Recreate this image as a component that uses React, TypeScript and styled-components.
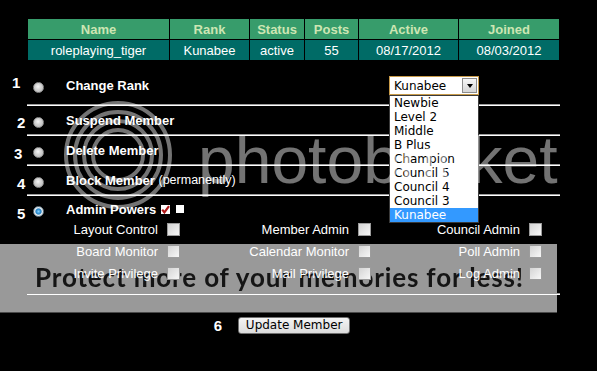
import React from "react";
import styled, { createGlobalStyle } from "styled-components";

const GlobalStyle = createGlobalStyle`
  html, body {
    margin: 0;
    padding: 0;
    background: #000;
  }
  body {
    font-family: "Liberation Sans", Arial, sans-serif;
  }
`;

const Page = styled.div`
  position: relative;
  width: 597px;
  height: 371px;
  overflow: hidden;
  background: #000;
  color: #fff;
  font-family: "Liberation Sans", Arial, sans-serif;
`;

const Content = styled.div`
  position: relative;
  z-index: 1;
  padding-top: 19px;
`;

// #region Member table
const StatsTable = styled.div`
  display: grid;
  grid-template-columns: 141px 79px 54px 53px 99px 100px;
  gap: 1px;
  width: 531px;
  margin-left: 28px;
`;
const Cell = styled.div<{ $head?: boolean }>`
  height: 20px;
  display: flex;
  align-items: center;
  justify-content: center;
  font-size: 13px;
  font-weight: ${(p) => (p.$head ? 700 : 400)};
  background: ${(p) => (p.$head ? "#379c6b" : "#006b66")};
  color: ${(p) => (p.$head ? "#cde6b3" : "#fff")};
`;
// #endregion

// #region Actions
const ActionList = styled.div`
  width: 560px;
  margin-top: 7px;
`;
const ActionRow = styled.div<{ $h: number; $pt?: number }>`
  display: flex;
  align-items: center;
  height: ${(p) => p.$h}px;
  padding-top: ${(p) => p.$pt ?? 0}px;
  box-sizing: border-box;
`;
const StepNo = styled.span<{ $x: number; $dy: number }>`
  width: 30px;
  padding-left: ${(p) => p.$x}px;
  box-sizing: border-box;
  font-size: 15px;
  font-weight: 700;
  line-height: 15px;
  margin-top: ${(p) => (p.$dy > 0 ? p.$dy * 2 : 0)}px;
  margin-bottom: ${(p) => (p.$dy < 0 ? -p.$dy * 2 : 0)}px;
`;
const Radio = styled.span<{ $on?: boolean }>`
  flex: none;
  width: 11px;
  height: 11px;
  margin: 4px 0 0 3px;
  border-radius: 50%;
  box-sizing: border-box;
  border: 1px solid ${(p) => (p.$on ? "#6b7f8c" : "#8d8d8d")};
  background: ${(p) =>
    p.$on
      ? "radial-gradient(circle at 50% 50%, #7fd0ff 0, #1f7fc4 2.6px, #dfe6ea 3.6px, #f4f4f4 100%)"
      : "radial-gradient(circle at 45% 40%, #f6f6f6 0, #d2d2d2 3px, #b4b4b4 100%)"};
`;
const ActionLabel = styled.span`
  flex: 1;
  display: flex;
  align-items: center;
  margin-left: 22px;
  font-size: 13px;
  font-weight: 700;
  white-space: pre;
`;
const Note = styled.span`
  font-size: 12.5px;
  font-weight: 400;
`;
const Separator = styled.div<{ $gap?: number }>`
  width: 533px;
  height: 2px;
  margin: ${(p) => p.$gap ?? 0}px 0 0 27px;
  box-sizing: border-box;
  border-top: 1px solid #9a9a9a;
  background: #fff;
`;
const ToggleAll = styled.svg`
  margin-left: 5px;
`;
const BlankBox = styled.span`
  width: 8px;
  height: 8px;
  margin-left: 6px;
  background: #fff;
`;
// #endregion

// #region Rank select
const RankSelect = styled.div`
  position: relative;
  width: 90px;
  height: 19px;
  margin-right: 81px;
  box-sizing: border-box;
  border: 1px solid #c89b4a;
  background: #fff;
  display: flex;
  align-items: center;
  color: #000;
  font-family: "DejaVu Sans", Tahoma, sans-serif;
  font-size: 12px;
`;
const SelectValue = styled.span`
  flex: 1;
  padding-left: 4px;
`;
const SelectArrow = styled.span`
  width: 15px;
  height: 15px;
  margin-right: 1px;
  box-sizing: border-box;
  border: 1px solid #8c8c8c;
  background: linear-gradient(#f6f6f6, #d6d6d6);
  display: flex;
  align-items: center;
  justify-content: center;
  &::after {
    content: "";
    border-left: 3.5px solid transparent;
    border-right: 3.5px solid transparent;
    border-top: 4px solid #000;
    margin-top: 1px;
  }
`;
const OptionList = styled.ul`
  position: absolute;
  top: 18px;
  left: -1px;
  width: 90px;
  margin: 0;
  padding: 0;
  list-style: none;
  box-sizing: border-box;
  border: 1px solid #3a3a3a;
  background: #fff;
`;
const OptionItem = styled.li<{ $selected?: boolean }>`
  height: 14px;
  line-height: 14px;
  padding-left: 4px;
  background: ${(p) => (p.$selected ? "#3399ff" : "transparent")};
  color: ${(p) => (p.$selected ? "#fff" : "#000")};
`;
// #endregion

// #region Admin powers
const PowersGrid = styled.div`
  display: grid;
  grid-template-columns: 183px 191px 171px;
  grid-auto-rows: 22px;
`;
const Power = styled.div`
  display: flex;
  align-items: center;
  justify-content: flex-end;
  gap: 9px;
  padding-right: 3px;
  font-size: 13px;
`;
const CheckBox = styled.span`
  width: 13px;
  height: 13px;
  box-sizing: border-box;
  border: 1px solid #9c9c9c;
  background: linear-gradient(135deg, #d4d4d4, #f7f7f7);
`;
// #endregion

// #region Submit
const SubmitRow = styled.div`
  display: flex;
  align-items: center;
  justify-content: center;
  gap: 16px;
  height: 17px;
  margin-top: 22px;
  padding-left: 4px;
`;
const SubmitNo = styled.span`
  font-size: 15px;
  font-weight: 700;
  line-height: 15px;
`;
const UpdateButton = styled.button`
  width: 112px;
  height: 17px;
  padding: 0;
  box-sizing: border-box;
  border: 1px solid #707070;
  border-radius: 3px;
  background: linear-gradient(#f4f4f4, #dcdcdc);
  color: #000;
  font-family: "DejaVu Sans", Tahoma, sans-serif;
  font-size: 12px;
  line-height: 15px;
`;
// #endregion

// #region Watermark
const PromoBanner = styled.div`
  position: absolute;
  left: 0;
  top: 244px;
  z-index: 0;
  width: 557px;
  height: 69px;
  box-sizing: border-box;
  padding: 20px 0 0 35px;
  background: #999;
  border-bottom: 1px solid #4a4a4a;
`;
const PromoText = styled.span`
  display: block;
  font-family: Lato, "Open Sans", sans-serif;
  font-weight: 700;
  font-size: 26px;
  line-height: 26px;
  letter-spacing: 0.85px;
  color: #151515;
  white-space: nowrap;
  filter: blur(0.6px);
`;
const Watermark = styled.div`
  position: absolute;
  inset: 0;
  z-index: 2;
  pointer-events: none;
`;
const Rings = styled.svg`
  position: absolute;
  left: 60px;
  top: 97px;
`;
const WatermarkText = styled.div`
  position: absolute;
  left: 198px;
  top: 127px;
  font-size: 66px;
  line-height: 66px;
  color: rgba(255, 255, 255, 0.45);
`;
// #endregion

const columns = ["Name", "Rank", "Status", "Posts", "Active", "Joined"];
const member = ["roleplaying_tiger", "Kunabee", "active", "55", "08/17/2012", "08/03/2012"];
const ranks = ["Newbie", "Level 2", "Middle", "B Plus", "Champion", "Council 5", "Council 4", "Council 3", "Kunabee"];
const powers = [
  "Layout Control", "Member Admin", "Council Admin",
  "Board Monitor", "Calendar Monitor", "Poll Admin",
  "Invite Privilege", "Mail Privilege", "Log Admin",
];

export default function App() {
  return (
    <Page>
      <GlobalStyle />
      <PromoBanner>
        <PromoText>Protect more of your memories for less!</PromoText>
      </PromoBanner>

      <Content>
        <StatsTable>
          {columns.map((c) => (
            <Cell key={c} $head>{c}</Cell>
          ))}
          {member.map((v, i) => (
            <Cell key={i}>{v}</Cell>
          ))}
        </StatsTable>

        <ActionList>
          <ActionRow $h={37}>
            <StepNo $x={12} $dy={-3}>1</StepNo>
            <Radio />
            <ActionLabel>Change Rank</ActionLabel>
            <RankSelect>
              <SelectValue>Kunabee</SelectValue>
              <SelectArrow />
              <OptionList>
                {ranks.map((r, i) => (
                  <OptionItem key={r} $selected={i === ranks.length - 1}>{r}</OptionItem>
                ))}
              </OptionList>
            </RankSelect>
          </ActionRow>
          <Separator />
          <ActionRow $h={28}>
            <StepNo $x={17} $dy={2}>2</StepNo>
            <Radio />
            <ActionLabel>Suspend Member</ActionLabel>
          </ActionRow>
          <Separator />
          <ActionRow $h={28}>
            <StepNo $x={14} $dy={3}>3</StepNo>
            <Radio />
            <ActionLabel>Delete Member</ActionLabel>
          </ActionRow>
          <Separator />
          <ActionRow $h={28}>
            <StepNo $x={17} $dy={3}>4</StepNo>
            <Radio />
            <ActionLabel>
              Block Member <Note>(permanently)</Note>
            </ActionLabel>
          </ActionRow>
          <Separator />
          <ActionRow $h={22} $pt={4}>
            <StepNo $x={17} $dy={4}>5</StepNo>
            <Radio $on />
            <ActionLabel>
              Admin Powers
              <ToggleAll width="9" height="9" viewBox="0 0 9 9">
                <rect width="9" height="9" fill="#fff" />
                <path d="M1.2 4.6 L3.4 7.4 L8 1.2" fill="none" stroke="#b01818" strokeWidth="2.2" />
              </ToggleAll>
              <BlankBox />
            </ActionLabel>
          </ActionRow>
          <PowersGrid>
            {powers.map((p) => (
              <Power key={p}>
                {p}
                <CheckBox />
              </Power>
            ))}
          </PowersGrid>
          <Separator $gap={9} />
          <SubmitRow>
            <SubmitNo>6</SubmitNo>
            <UpdateButton>Update Member</UpdateButton>
          </SubmitRow>
        </ActionList>
      </Content>

      <Watermark>
        <Rings width="116" height="116" viewBox="0 0 116 116">
          {[52, 43, 34, 25].map((r) => (
            <circle key={r} cx="58" cy="58" r={r} fill="none" stroke="rgba(255,255,255,0.45)" strokeWidth="4" />
          ))}
        </Rings>
        <WatermarkText>photobucket</WatermarkText>
      </Watermark>
    </Page>
  );
}
